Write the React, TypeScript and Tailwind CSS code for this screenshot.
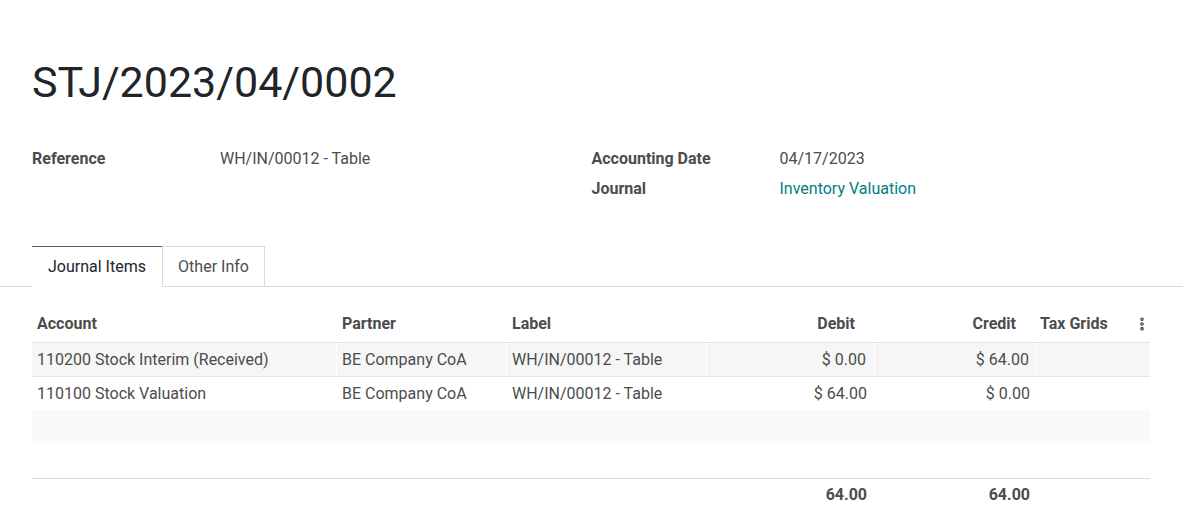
import { EllipsisVertical } from "lucide-react"

const rows = [
  {
    account: "110200 Stock Interim (Received)",
    partner: "BE Company CoA",
    label: "WH/IN/00012 - Table",
    debit: "$ 0.00",
    credit: "$ 64.00",
  },
  {
    account: "110100 Stock Valuation",
    partner: "BE Company CoA",
    label: "WH/IN/00012 - Table",
    debit: "$ 64.00",
    credit: "$ 0.00",
  },
]

export default function App() {
  return (
    <div className="min-h-[528px] bg-white text-[16px] text-[#4c4c4c]" style={{ fontFamily: "Roboto, 'Noto Sans', sans-serif" }}>
      <div className="px-8 pt-[56px]">
        <h1 className="text-[43px] leading-[52px] text-[#212529]">STJ/2023/04/0002</h1>

        {/* header fields */}
        <div className="mt-[36px] grid grid-cols-2">
          <div className="grid grid-cols-[188px_1fr] auto-rows-[30px] items-center">
            <span className="font-bold">Reference</span>
            <span>WH/IN/00012 - Table</span>
          </div>
          <div className="grid grid-cols-[188px_1fr] auto-rows-[30px] items-center">
            <span className="font-bold">Accounting Date</span>
            <span>04/17/2023</span>
            <span className="font-bold">Journal</span>
            <span className="text-[#017e84]">Inventory Valuation</span>
          </div>
        </div>
      </div>

      {/* tabs */}
      <div className="mt-[42px] flex border-b border-[#d8dadd] px-8">
        <div className="-mb-px flex h-[41px] w-[130px] items-center justify-center border-t border-[#714b67] bg-white text-[#212529]">
          Journal Items
        </div>
        <div className="-mb-px flex h-[41px] w-[103px] items-center justify-center border border-[#d8dadd] bg-white">
          Other Info
        </div>
      </div>

      {/* journal items table */}
      <div className="mx-8 mt-[18px] w-[1118px]">
        <div className="grid h-[37px] grid-cols-[305px_170px_200px_168px_161px_89px_25px] items-center font-bold">
          <span className="pl-[5px]">Account</span>
          <span className="pl-[5px]">Partner</span>
          <span className="pl-[5px]">Label</span>
          <span className="pr-5 text-right">Debit</span>
          <span className="pr-5 text-right">Credit</span>
          <span className="pl-[4px]">Tax Grids</span>
          <span className="flex justify-end">
            <EllipsisVertical className="h-4 w-4" strokeWidth={3.5} />
          </span>
        </div>
        {rows.map((row, i) => (
          <div
            key={row.account}
            className={`grid h-[34px] grid-cols-[305px_170px_200px_168px_161px_89px_25px] items-center border-t border-[#e4e5e7] ${i === 0 ? "bg-[#f6f6f6]" : "bg-white"}`}
          >
            <span className={`flex h-full items-center pl-[5px] ${i === 0 ? "border-r border-white" : ""}`}>{row.account}</span>
            <span className={`flex h-full items-center pl-[5px] ${i === 0 ? "border-r border-white" : ""}`}>{row.partner}</span>
            <span className={`flex h-full items-center pl-[5px] ${i === 0 ? "border-r border-white" : ""}`}>{row.label}</span>
            <span className={`flex h-full items-center justify-end pr-2 ${i === 0 ? "border-r border-white" : ""}`}>{row.debit}</span>
            <span className={`flex h-full items-center justify-end pr-[6px] ${i === 0 ? "border-r border-white" : ""}`}>{row.credit}</span>
            <span />
            <span />
          </div>
        ))}
        <div className="h-[33px] bg-[#fafafa]" />
        <div className="h-[35px] bg-white" />
        <div className="grid h-[32px] grid-cols-[305px_170px_200px_168px_161px_89px_25px] items-center border-t border-[#d8dadd] font-bold">
          <span />
          <span />
          <span />
          <span className="pr-2 text-right">64.00</span>
          <span className="pr-[6px] text-right">64.00</span>
          <span />
          <span />
        </div>
      </div>
    </div>
  )
}
